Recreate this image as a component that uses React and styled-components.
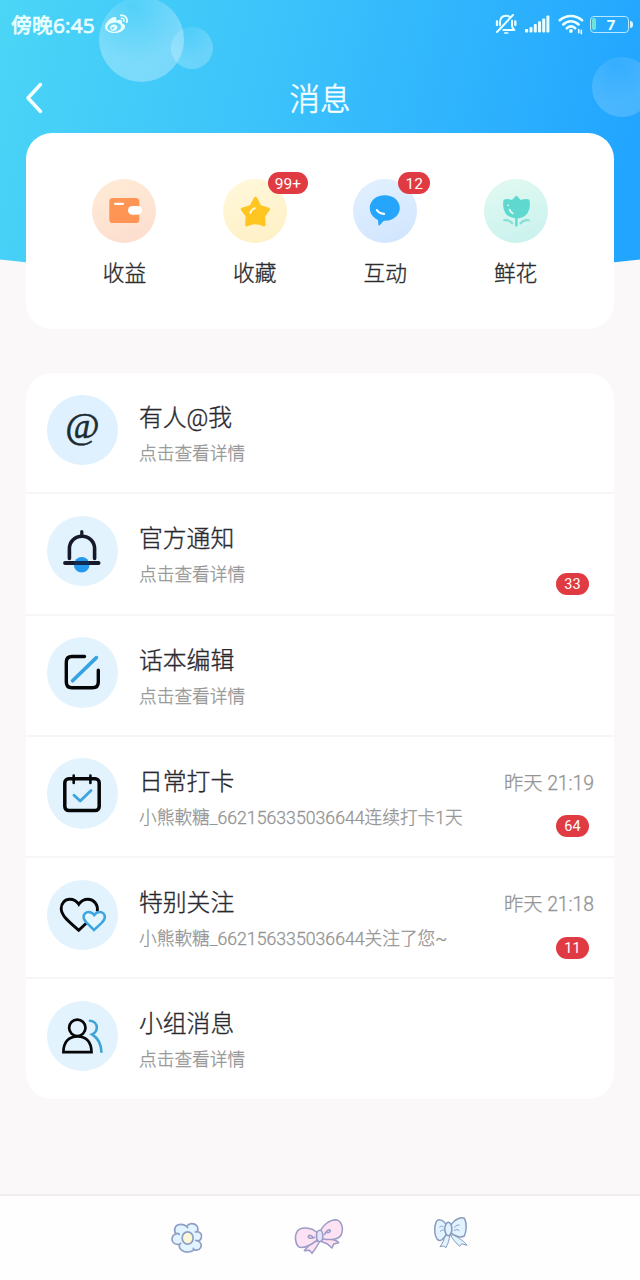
import React from 'react';
import styled, { createGlobalStyle } from 'styled-components';
import { FaWeibo } from 'react-icons/fa';

const shortcuts = [
  { label: '收益', icon: WalletIcon, from: '#ffecd6', to: '#fddccf' },
  { label: '收藏', icon: StarIcon, from: '#fff8dc', to: '#fff0c4', count: '99+' },
  { label: '互动', icon: ChatIcon, from: '#e2f1ff', to: '#cfe4fd', count: '12' },
  { label: '鲜花', icon: TulipIcon, from: '#e2faf1', to: '#c8f1ee' },
];

const messages = [
  { title: '有人@我', text: '点击查看详情', icon: AtIcon, tint: '#dff1fe' },
  { title: '官方通知', text: '点击查看详情', icon: BellIcon, count: 33 },
  { title: '话本编辑', text: '点击查看详情', icon: EditIcon },
  { title: '日常打卡', text: '小熊軟糖_662156335036644连续打卡1天', icon: CalendarIcon, time: '昨天 21:19', count: 64 },
  { title: '特别关注', text: '小熊軟糖_662156335036644关注了您~', icon: HeartsIcon, time: '昨天 21:18', count: 11 },
  { title: '小组消息', text: '点击查看详情', icon: GroupIcon },
];

export default function App() {
  return (
    <Screen>
      <GlobalStyle />
      <Backdrop>
        <Bubble $x={98.5} $y={-3.5} $size={85} $alpha={0.3} />
        <Bubble $x={171} $y={27} $size={42} $alpha={0.22} />
        <Bubble $x={592} $y={57} $size={60} $alpha={0.17} />
      </Backdrop>
      <StatusBar>
        <Clock>傍晚6:45</Clock>
        <FaWeibo size={23} />
        <StatusIcons>
          <MutedIcon />
          <SignalIcon />
          <WifiIcon />
          <Battery>
            <BatteryBody>
              <BatteryLevel />
              <BatteryText>7</BatteryText>
            </BatteryBody>
            <BatteryTip />
          </Battery>
        </StatusIcons>
      </StatusBar>
      <TitleBar>
        <BackIcon />
        <Title>消息</Title>
      </TitleBar>
      <ShortcutCard>
        {shortcuts.map(({ label, icon: Icon, from, to, count }) => (
          <Shortcut key={label}>
            <ShortcutIcon $from={from} $to={to}>
              <Icon />
              {count && <CornerBadge>{count}</CornerBadge>}
            </ShortcutIcon>
            <ShortcutLabel>{label}</ShortcutLabel>
          </Shortcut>
        ))}
      </ShortcutCard>
      <MessageCard>
        {messages.map(({ title, text, icon: Icon, tint, time, count }) => (
          <Message key={title}>
            <MessageIcon $tint={tint}>
              <Icon />
            </MessageIcon>
            <MessageBody>
              <MessageTitle>{title}</MessageTitle>
              <MessageText>{text}</MessageText>
            </MessageBody>
            <MessageSide>
              <Time>{time}</Time>
              {count && <Badge>{count}</Badge>}
            </MessageSide>
          </Message>
        ))}
      </MessageCard>
      <BottomNav>
        <NavItem $top={24.5}><FlowerIcon /></NavItem>
        <NavItem $top={22}><PinkBowIcon /></NavItem>
        <NavItem $top={20}><BlueBowIcon /></NavItem>
      </BottomNav>
    </Screen>
  );
}

function MutedIcon() {
  return (
    <svg width="22" height="22" viewBox="47 25 66 66" fill="none" stroke="currentColor" strokeWidth="6" strokeLinecap="round" strokeLinejoin="round">
      <path d="M62 62V54C62 40 69 33 80 33C84 33 87 34 90 36" />
      <path d="M98 48V66L105 76H72" />
      <path d="M53 82L101 31" />
      <path d="M76 85H85" strokeWidth="5" />
      <path d="M53 50V61M108 50V61" strokeWidth="7" />
    </svg>
  );
}

function SignalIcon() {
  return (
    <svg width="25" height="18" viewBox="0 0 25 18" fill="currentColor">
      <rect x="0" y="14" width="3.2" height="3.5" rx="1" />
      <rect x="4.5" y="12" width="3" height="5.5" rx="1" />
      <rect x="8.8" y="9" width="3" height="8.5" rx="1" />
      <rect x="13" y="6.3" width="3" height="11.2" rx="1" />
      <rect x="17.2" y="3.6" width="3" height="13.9" rx="1" />
      <rect x="21.4" y="0.5" width="3" height="17" rx="1" />
    </svg>
  );
}

function WifiIcon() {
  return (
    <svg width="26" height="21" viewBox="0 0 26 21" fill="none" stroke="currentColor" strokeWidth="2.7" strokeLinecap="round">
      <path d="M1.8 6.2C8.3 0.6 17.5 0.6 24 6.2" />
      <path d="M5.2 10.4C9.8 6.2 16 6.2 20.6 10.4" />
      <path d="M8.8 14.2C11.4 11.9 14.6 11.9 17.2 14.2" />
      <circle cx="12.9" cy="17" r="1.9" fill="currentColor" stroke="none" />
      <path d="M20.7 15.6V18.8M23.3 16.4V19.6" strokeWidth="1.6" />
    </svg>
  );
}

function BackIcon() {
  return (
    <svg width="18" height="32" viewBox="0 0 18 32" fill="none" stroke="#f4ffff" strokeWidth="3.5" strokeLinecap="round" strokeLinejoin="round">
      <path d="M15.5 2.5L3 16L15.5 29.5" />
    </svg>
  );
}

function WalletIcon() {
  return (
    <svg width="64" height="64">
      <rect x="17.3" y="19" width="30" height="25" rx="3.6" fill="#ff9554" />
      <rect x="36" y="27" width="14" height="8.8" rx="4.4" fill="#fff" />
      <path d="M23 24.8H31" stroke="#fff" strokeWidth="2.2" strokeLinecap="round" />
    </svg>
  );
}

function StarIcon() {
  return (
    <svg width="64" height="64" fill="none" strokeLinecap="round" strokeLinejoin="round">
      <path
        d="M32.5 19.3L36.8 27.6L45.4 30.2L40.6 36.8L41 45.8Q32.3 41.4 23.8 45.8L24.2 36.8L19.4 30.2L28.2 27.6Z"
        fill="#ffc520"
        stroke="#ffc520"
        strokeWidth="3.2"
      />
      <path d="M27.3 34Q28.3 30.2 32 29.2" stroke="#fff6d8" strokeWidth="1.8" />
    </svg>
  );
}

function ChatIcon() {
  return (
    <svg width="64" height="64" fill="none" strokeLinecap="round">
      <path d="M31.7 16.3C40.2 16.3 46.8 21.7 46.8 29C46.8 36.3 40.2 41.7 32.5 41.7C31 41.7 30.4 42.2 29.6 43.1L27 46C26.3 46.7 25.4 46.4 25.4 45.4L25 41C20 38.6 16.8 34.3 16.8 29C16.8 21.7 23.3 16.3 31.7 16.3Z" fill="#25a5fb" />
      <path d="M23.9 31.2Q26.5 34.8 31 34.9" stroke="#fff" strokeWidth="2.2" />
    </svg>
  );
}

function TulipIcon() {
  return (
    <svg width="64" height="64" fill="none" stroke="#5fd9d0" strokeLinecap="round" strokeLinejoin="round">
      <path d="M20.3 21.2C23.5 20.4 26.5 21.2 28 22L32.4 17.5L36.8 22C38.5 21.2 41.4 20.4 44.7 21.2C46.4 31 42.5 38.4 32.4 38.6C22.4 38.4 18.6 31 20.3 21.2Z" fill="#5fd9d0" strokeWidth="1.6" />
      <path d="M32.4 38V46.3" strokeWidth="2.4" />
      <path d="M20.2 41.3Q24.8 40.2 28.2 44.3M44.6 41.3Q40 40.2 36.6 44.3" stroke="#86ded6" strokeWidth="2.2" />
      <path d="M24.2 26.2V26.5M25.6 30.5Q26.6 33.4 28.8 34.5" stroke="#e9fffa" strokeWidth="1.6" />
    </svg>
  );
}

function AtIcon() {
  return <AtSign>@</AtSign>;
}

function BellIcon() {
  return (
    <svg width="70" height="70" fill="none" stroke="#15192b" strokeWidth="3.6" strokeLinecap="round">
      <circle cx="34.7" cy="48.7" r="7.8" fill="#2698ed" stroke="none" />
      <path d="M22.4 42.5V32.8C22.4 25.5 28 20.2 35 20.2C42 20.2 47.6 25.5 47.6 32.8V42.5" />
      <path d="M34.8 15.5V19" strokeWidth="3.2" />
      <path d="M18 47H51.6" strokeWidth="3.8" />
      <path d="M27.3 47H42.2" stroke="#102d57" strokeWidth="3.8" strokeLinecap="butt" />
    </svg>
  );
}

function EditIcon() {
  return (
    <svg width="70" height="70" fill="none" stroke="#050608" strokeWidth="3.4" strokeLinecap="round">
      <path d="M37.5 19.5H25Q19.3 19.5 19.3 25.2V45Q19.3 50.8 25 50.8H45.5Q51.3 50.8 51.3 45V33.3" />
      <path d="M25.6 43.8L49.4 20.6" stroke="#35a3e3" strokeWidth="3.6" />
    </svg>
  );
}

function CalendarIcon() {
  return (
    <svg width="70" height="70" fill="none" stroke="#050608" strokeWidth="3.5" strokeLinecap="round" strokeLinejoin="round">
      <rect x="17.8" y="20.8" width="34.4" height="31.8" rx="4" />
      <path d="M26.7 17.6V25M43.4 17.6V25" strokeWidth="2.6" />
      <path d="M27 37.3L33.2 43L44 32.5" stroke="#3da5df" strokeWidth="2.9" />
    </svg>
  );
}

function HeartsIcon() {
  return (
    <svg width="70" height="70" fill="none" stroke="#050608" strokeWidth="2.9">
      <path d="M50.2 31.5C51.6 24.5 46.5 19.3 41 19.3C37 19.3 33.8 21.3 31.8 24.3C29.8 21.3 26.5 19.3 22.8 19.3C17.8 19.3 14.2 23.5 14.2 28.6C14.2 35.2 20 40 31.7 50.2L39.5 43" />
      <path d="M47 50L40 43.2C37.6 40.8 36.6 39.2 36.6 37C36.6 34 38.8 31.9 41.6 31.9C44 31.9 45.8 33 47.2 35C48.6 33 50.4 31.9 52.6 31.9C55.6 31.9 57.8 34 57.8 37C57.8 39.2 56.8 40.8 54.4 43.2Z" stroke="#3da5df" strokeWidth="2.5" fill="#e6f6ff" />
    </svg>
  );
}

function GroupIcon() {
  return (
    <svg width="70" height="70" fill="none" stroke="#050608" strokeWidth="2.7" strokeLinecap="round">
      <circle cx="30.3" cy="26.8" r="8.2" />
      <path d="M16.4 51.2C16.4 41 22 35.3 30.5 35.3C39 35.3 44.5 41 44.5 51.2Z" strokeLinejoin="miter" />
      <path d="M43 19.8C47 20.2 49.8 23 49.8 26.6C49.8 29.8 48 32.2 45 33.4C50.6 36.8 54 42.5 54.4 50.8" stroke="#3fa3d6" strokeWidth="2.6" />
    </svg>
  );
}

function FlowerIcon() {
  return (
    <svg width="34" height="34" viewBox="61 121 102 102" fill="#e2f4ff" stroke="#8f9ec6" strokeWidth="5" strokeLinecap="round" strokeLinejoin="round">
      <path d="M78 160C70 144 78 131 94 131C101 131 106 133 111 137C117 127 133 126 141 135C146 141 146 147 142 153C153 154 158 162 155 171C154 177 149 180 144 181C154 184 157 193 153 201C149 208 141 210 133 207C126 215 108 217 98 210C91 206 88 200 89 192C78 192 67 187 67 176C67 167 72 162 78 160Z" />
      <path d="M78 160C82 157 86 158 89 161M111 137L114 141M142 153L137 154M144 181L138 179M89 192L93 188M133 207L131 203" fill="none" />
      <ellipse cx="114" cy="172" rx="16.5" ry="18.5" fill="#fbf8d5" />
    </svg>
  );
}

function PinkBowIcon() {
  return (
    <svg width="50" height="37" viewBox="431 116 150 111" fill="#fde2f4" stroke="#9b9bc8" strokeWidth="4.6" strokeLinecap="round" strokeLinejoin="round">
      <path d="M498 184L476 198L462 214L477 213L485 222C494 211 501 199 507 188Z" />
      <path d="M512 186L530 193L545 206L550 194L565 190C561 183 550 180 532 178L517 175Z" />
      <path d="M499 158C484 146 455 140 442 154C431 169 435 193 444 202C460 211 482 196 500 183Z" />
      <path d="M511 153C518 139 536 121 557 121C575 124 580 149 573 165C566 182 538 183 516 178Z" />
      <ellipse cx="508" cy="170" rx="9.5" ry="17" fill="#e6e4fb" />
      <path d="M493 174C482 179 472 177 474 171C477 166 485 168 487 173M523 165C528 154 536 149 540 153C541 159 533 162 529 158" fill="none" />
    </svg>
  );
}

function BlueBowIcon() {
  return (
    <svg width="36" height="34" viewBox="849 110 108 102" fill="#e1f3ff" stroke="#8899bd" strokeWidth="4.4" strokeLinecap="round" strokeLinejoin="round">
      <path d="M885 169C882 183 877 193 870 202L880 200L888 205C894 193 898 181 899 170Z" strokeWidth="3" />
      <path d="M902 168C910 183 919 192 929 201L935 193L951 198C945 187 929 178 911 167Z" strokeWidth="3" />
      <path d="M887 134C881 122 865 117 859 127C851 143 853 170 863 181C872 189 882 177 889 165Z" />
      <path d="M904 135C914 120 934 111 944 118C951 134 949 158 943 170C932 176 916 170 904 162Z" />
      <ellipse cx="895" cy="149" rx="10.5" ry="20" />
      <path d="M869 143C876 138 879 141 881 144M871 156C876 151 880 151 882 153M913 144C919 138 924 136 928 137M913 153C919 150 923 150 927 153" fill="none" strokeWidth="2.8" />
    </svg>
  );
}

const GlobalStyle = createGlobalStyle`
  * {
    box-sizing: border-box;
  }
  body {
    margin: 0;
    background: #faf8f9;
    font-family: Roboto, 'Noto Sans CJK SC', sans-serif;
  }
  svg {
    display: block;
    flex-shrink: 0;
  }
`;

const Screen = styled.div`
  position: relative;
  display: flex;
  flex-direction: column;
  width: 640px;
  height: 1280px;
  overflow: hidden;
  background: #faf8f9;
`;

const Backdrop = styled.div`
  position: absolute;
  top: 0;
  left: 0;
  width: 640px;
  height: 280px;
  background: linear-gradient(104deg, #4bd5f6 0%, #3bc2fb 42%, #22a5ff 94%);
  clip-path: path('M0 0H640V259.5Q320 298 0 259.5Z');
`;

const Bubble = styled.div`
  position: absolute;
  left: ${(p) => p.$x}px;
  top: ${(p) => p.$y}px;
  width: ${(p) => p.$size}px;
  height: ${(p) => p.$size}px;
  border-radius: 50%;
  background: radial-gradient(circle at 40% 10%, rgba(255, 255, 255, 0.08), rgba(255, 255, 255, ${(p) => p.$alpha}) 60%);
`;

const StatusBar = styled.div`
  position: relative;
  display: flex;
  align-items: center;
  height: 48px;
  padding: 0 7px 0 11px;
  color: #eaffff;

  > svg {
    margin-left: 9px;
  }
`;

const Clock = styled.div`
  width: 85px;
  padding-top: 1px;
  font-family: 'Open Sans', 'Noto Sans CJK SC', sans-serif;
  font-size: 20.8px;
  font-weight: 400;
  line-height: 28px;
  letter-spacing: 0.2px;
  white-space: nowrap;
  -webkit-text-stroke: 0.7px #eaffff;
`;

const StatusIcons = styled.div`
  display: flex;
  align-items: center;
  margin-left: auto;

  > svg + svg {
    margin-left: 8px;
  }
`;

const Battery = styled.div`
  display: flex;
  align-items: center;
  margin-left: 6px;
`;

const BatteryBody = styled.div`
  position: relative;
  display: flex;
  align-items: center;
  width: 39px;
  height: 17px;
  padding: 1px;
  border: 1px solid #b5e8ff;
  border-radius: 4px;
`;

const BatteryLevel = styled.div`
  width: 4px;
  height: 12px;
  border-radius: 2px;
  background: #6fe3d8;
`;

const BatteryText = styled.div`
  flex: 1;
  padding-right: 1px;
  text-align: center;
  font-family: 'Open Sans', sans-serif;
  font-size: 15px;
  font-weight: 700;
  line-height: 14px;
`;

const BatteryTip = styled.div`
  width: 3px;
  height: 7px;
  margin-left: 1px;
  border-radius: 0 4px 4px 0;
  background: #d5f6ff;
`;

const TitleBar = styled.div`
  position: relative;
  display: flex;
  align-items: center;
  height: 85px;
  padding: 14px 25px 0;
`;

const Title = styled.div`
  flex: 1;
  padding: 4px 18px 0 0;
  text-align: center;
  color: #f4ffff;
  font-size: 30.5px;
  font-weight: 300;
  line-height: 40px;
  -webkit-text-stroke: 0.6px #f4ffff;
`;

const ShortcutCard = styled.div`
  position: relative;
  display: grid;
  grid-template-columns: repeat(4, 130.4px);
  justify-content: center;
  height: 196px;
  margin: 0 26px;
  padding-top: 46px;
  border-radius: 26px;
  background: #fff;
`;

const Shortcut = styled.div`
  display: flex;
  flex-direction: column;
  align-items: center;
`;

const ShortcutIcon = styled.div`
  position: relative;
  width: 64px;
  height: 64px;
  border-radius: 50%;
  background: linear-gradient(160deg, ${(p) => p.$from}, ${(p) => p.$to});
`;

const Badge = styled.div`
  min-width: 33px;
  height: 22px;
  padding: 0 7px;
  border-radius: 11px;
  background: #e03b42;
  color: #fff;
  text-align: center;
  font-size: 14.5px;
  line-height: 23px;
`;

const CornerBadge = styled(Badge)`
  position: absolute;
  left: 45px;
  top: -7px;
  min-width: 32px;
  font-size: 15.5px;
  line-height: 24px;
`;

const ShortcutLabel = styled.div`
  margin-top: 15px;
  color: #2c2c2e;
  font-size: 21.7px;
  font-weight: 300;
  line-height: 32px;
  -webkit-text-stroke: 0.35px #2c2c2e;
`;

const MessageCard = styled.div`
  margin: 44px 26px 0;
  border-radius: 26px;
  background: #fff;
`;

const Message = styled.div`
  display: flex;
  height: 121.25px;
  padding: 21.5px 20px 0 21px;
  border-bottom: 2px solid #f7f6f7;

  &:last-child {
    height: 119.75px;
    border-bottom: none;
  }
`;

const MessageIcon = styled.div`
  flex-shrink: 0;
  width: 70.5px;
  height: 70.5px;
  border-radius: 50%;
  background: ${(p) => p.$tint || '#e3f3fe'};
`;

const AtSign = styled.div`
  color: #1c2b33;
  text-align: center;
  font-family: 'Liberation Serif', serif;
  font-size: 37px;
  font-style: italic;
  line-height: 70px;
  transform: translateY(-3.5px) scaleY(0.95);
  -webkit-text-stroke: 0.6px #1c2b33;
`;

const MessageBody = styled.div`
  flex: 1;
  padding-left: 21.5px;
  white-space: nowrap;
`;

const MessageTitle = styled.div`
  margin-top: 6.5px;
  color: #2a292f;
  font-size: 23.8px;
  font-weight: 300;
  line-height: 34px;
  -webkit-text-stroke: 0.35px #2a292f;
`;

const MessageText = styled.div`
  margin-top: 6px;
  color: #959595;
  font-size: 17.7px;
  font-weight: 300;
  line-height: 26px;
  -webkit-text-stroke: 0.3px #959595;
`;

const MessageSide = styled.div`
  display: flex;
  flex-direction: column;
  align-items: flex-end;

  ${Badge} {
    margin: 17.5px 5px 0 0;
  }
`;

const Time = styled.div`
  height: 28px;
  margin-top: 11.5px;
  color: #959595;
  font-size: 19.3px;
  font-weight: 300;
  line-height: 28px;
  -webkit-text-stroke: 0.3px #959595;
`;

const BottomNav = styled.div`
  display: grid;
  grid-template-columns: repeat(3, 132px);
  justify-content: center;
  height: 86px;
  margin-top: auto;
  padding-right: 2px;
  border-top: 2px solid #f0edf0;
  background: #fefeff;
`;

const NavItem = styled.div`
  display: flex;
  justify-content: center;
  align-items: flex-start;
  padding-top: ${(p) => p.$top}px;
`;
